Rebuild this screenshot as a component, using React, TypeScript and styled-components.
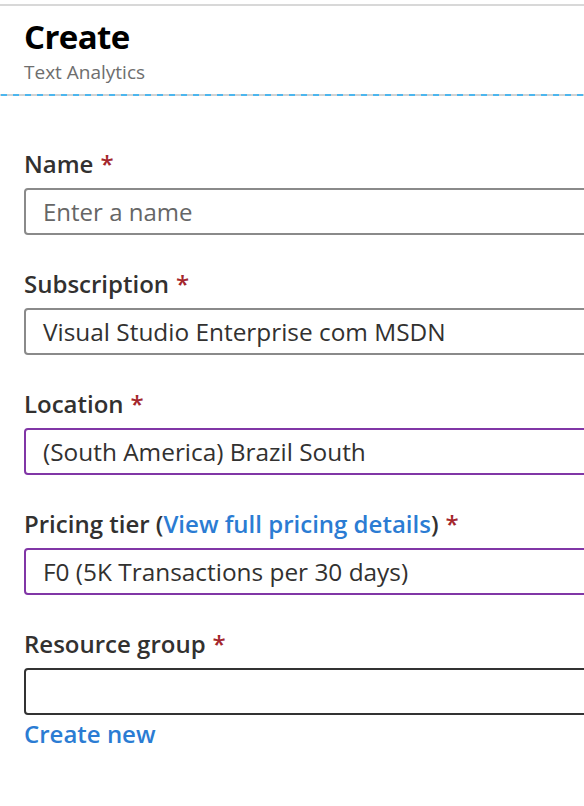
import React from "react";
import styled, { createGlobalStyle } from "styled-components";

const Global = createGlobalStyle`
  html, body { margin: 0; padding: 0; background: #fff; overflow: hidden; }
  body { font-family: "Open Sans", "Noto Sans", sans-serif; }
`;

const Page = styled.div`
  width: 584px;
  height: 806px;
  overflow: hidden;
  padding-top: 4px;
  box-sizing: border-box;
`;

const TopRule = styled.div`
  height: 2px;
  background: #d8d8d8;
`;

const Header = styled.header`
  display: flex;
  flex-direction: column;
  gap: 3px;
  padding: 11px 0 0 24px;
  height: 88px;
  box-sizing: border-box;
`;

const Title = styled.h1`
  margin: 0;
  font-size: 33px;
  line-height: 40px;
  font-weight: 700;
  color: #000;
  letter-spacing: -0.6px;
`;

const Subtitle = styled.div`
  font-size: 19px;
  line-height: 24px;
  color: #6e6e6e;
`;

const DashedRule = styled.div`
  height: 2px;
  background: repeating-linear-gradient(
    to right,
    #d2d2d2 0 1px,
    #4cb6ee 1px 7px,
    #d2d2d2 7px 12px
  );
`;

const Form = styled.form`
  display: flex;
  flex-direction: column;
  gap: 34px;
  padding: 53px 0 0 24px;
`;

const Field = styled.div`
  display: flex;
  flex-direction: column;
  gap: 9px;
`;

const Label = styled.label`
  font-size: 24px;
  line-height: 30px;
  font-weight: 600;
  color: #323130;
  white-space: nowrap;
`;

const Req = styled.span`
  color: #a4262c;
  margin-left: 7px;
`;

const Link = styled.a`
  color: #2b7cd3;
  text-decoration: none;
  cursor: pointer;
`;

const Box = styled.div<{ $tone: "gray" | "purple" | "dark" }>`
  width: 620px;
  height: 47px;
  box-sizing: border-box;
  border: 2px solid
    ${(p) => (p.$tone === "purple" ? "#8136a6" : p.$tone === "dark" ? "#333" : "#8a8a8a")};
  border-radius: 4px;
  display: flex;
  align-items: center;
  padding-left: 17px;
  font-size: 24.4px;
  color: #323130;
  white-space: nowrap;
`;

const Placeholder = styled.span`
  color: #666;
  font-size: 24px;
`;

const CreateNew = styled(Link)`
  font-size: 24px;
  font-weight: 600;
  line-height: 30px;
  margin-top: -5px;
`;

export default function App() {
  return (
    <Page>
      <Global />
      <TopRule />
      <Header>
        <Title>Create</Title>
        <Subtitle>Text Analytics</Subtitle>
      </Header>
      <DashedRule />
      <Form>
        <Field>
          <Label>
            Name<Req>*</Req>
          </Label>
          <Box $tone="gray">
            <Placeholder>Enter a name</Placeholder>
          </Box>
        </Field>
        <Field>
          <Label>
            Subscription<Req>*</Req>
          </Label>
          <Box $tone="gray">Visual Studio Enterprise com MSDN</Box>
        </Field>
        <Field>
          <Label>
            Location<Req>*</Req>
          </Label>
          <Box $tone="purple">(South America) Brazil South</Box>
        </Field>
        <Field>
          <Label>
            Pricing tier (<Link>View full pricing details</Link>)<Req>*</Req>
          </Label>
          <Box $tone="purple">F0 (5K Transactions per 30 days)</Box>
        </Field>
        <Field>
          <Label>
            Resource group<Req>*</Req>
          </Label>
          <Box $tone="dark" />
          <CreateNew>Create new</CreateNew>
        </Field>
      </Form>
    </Page>
  );
}
